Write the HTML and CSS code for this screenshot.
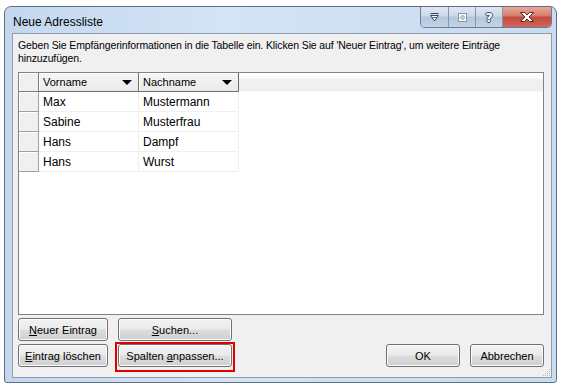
FILE: index.html
```html
<!DOCTYPE html>
<html lang="de">
<head>
<meta charset="utf-8">
<title>Neue Adressliste</title>
<link rel="stylesheet" href="styles.css">
</head>
<body>
<div class="window">
  <div class="titlebar">
    <div class="title">Neue Adressliste</div>
    <div class="caption-buttons">
      <div class="cbtn cbtn-min">
        <svg width="11" height="11" viewBox="0 0 11 11"><path d="M1.5 1.5h8" stroke="#3c4a5c" stroke-width="1.2" fill="none"/><path d="M1.5 3.5h8l-4 5.5z" fill="#fff" stroke="#3c4a5c" stroke-width="1"/><path d="M3 5.5h5" stroke="#3c4a5c" stroke-width="0.8"/></svg>
      </div>
      <div class="cbtn cbtn-res">
        <svg width="11" height="11" viewBox="0 0 11 11"><rect x="1.5" y="1.5" width="8" height="8" fill="#fff" stroke="#8a95a3"/><path d="M3 5.5l2.5-2.5 2.5 2.5-2.5 2.5z" fill="#c8ced6" stroke="#8a95a3" stroke-width="0.8"/></svg>
      </div>
      <div class="cbtn cbtn-help"><span class="help-glyph">?</span></div>
      <div class="cbtn cbtn-close">
        <svg width="16" height="12" viewBox="0 0 16 12"><path d="M1.5 1.5h4l2.5 2.5 2.5-2.5h4l-4.5 4.5 4.5 4.5h-4l-2.5-2.5-2.5 2.5h-4l4.5-4.5z" fill="#fff" stroke="#5a2a26" stroke-width="1" stroke-linejoin="round"/></svg>
      </div>
    </div>
  </div>
  <div class="client">
    <p class="intro">Geben Sie Empfängerinformationen in die Tabelle ein. Klicken Sie auf 'Neuer Eintrag', um weitere Einträge hinzuzufügen.</p>
    <div class="grid">
      <div class="grow ghead">
        <div class="rowhead corner"></div>
        <div class="colhead"><span>Vorname</span><span class="tri"></span></div>
        <div class="colhead"><span>Nachname</span><span class="tri"></span></div>
        <div class="headfill"></div>
      </div>
      <div class="grow">
        <div class="rowhead"></div>
        <div class="cell">Max</div>
        <div class="cell">Mustermann</div>
      </div>
      <div class="grow">
        <div class="rowhead"></div>
        <div class="cell">Sabine</div>
        <div class="cell">Musterfrau</div>
      </div>
      <div class="grow">
        <div class="rowhead"></div>
        <div class="cell">Hans</div>
        <div class="cell">Dampf</div>
      </div>
      <div class="grow">
        <div class="rowhead"></div>
        <div class="cell">Hans</div>
        <div class="cell">Wurst</div>
      </div>
    </div>
    <div class="btnrow">
      <button class="btn btn-left"><u>N</u>euer Eintrag</button>
      <button class="btn btn-mid"><u>S</u>uchen...</button>
    </div>
    <div class="btnrow btnrow2">
      <button class="btn btn-left"><u>E</u>intrag löschen</button>
      <button class="btn btn-mid highlighted">Spalten <u>a</u>npassen...</button>
      <div class="spacer"></div>
      <button class="btn btn-dlg">OK</button>
      <button class="btn btn-dlg">Abbrechen</button>
    </div>
    <svg class="grip" width="10" height="10" viewBox="0 0 10 10"><g fill="#b8b8b8"><rect x="8" y="2" width="1" height="1"/><rect x="6" y="4" width="1" height="1"/><rect x="8" y="4" width="1" height="1"/><rect x="4" y="6" width="1" height="1"/><rect x="6" y="6" width="1" height="1"/><rect x="8" y="6" width="1" height="1"/><rect x="2" y="8" width="1" height="1"/><rect x="4" y="8" width="1" height="1"/><rect x="6" y="8" width="1" height="1"/><rect x="8" y="8" width="1" height="1"/></g></svg>
  </div>
</div>
</body>
</html>
```
FILE: styles.css
```css
html, body {
  margin: 0;
  padding: 0;
  background: #ffffff;
  width: 563px;
  height: 385px;
  overflow: hidden;
}

body {
  font-family: "Liberation Sans", Arial, sans-serif;
  font-size: 11px;
  color: #000;
}

.window {
  box-sizing: border-box;
  margin: 6px 0 0 4px;
  width: 553px;
  height: 377px;
  border: 1px solid #5f6f84;
  border-radius: 7px 7px 3px 3px;
  background: linear-gradient(90deg, #c3d8ef 0%, #d4e3f5 40%, #c9dbf0 100%);
  padding: 0 4px 4px 7px;
  display: flex;
  flex-direction: column;
}

.titlebar {
  height: 26px;
  display: flex;
  justify-content: space-between;
  align-items: flex-start;
}

.title {
  font-size: 12px;
  padding-top: 8px;
  padding-left: 1px;
  color: #000;
}

.caption-buttons {
  display: flex;
  height: 20px;
  margin-right: 0;
  border: 1px solid #6b7d95;
  border-top: none;
  border-radius: 0 0 5px 5px;
  overflow: hidden;
}

.cbtn {
  box-sizing: border-box;
  height: 20px;
  width: 27px;
  display: flex;
  align-items: center;
  justify-content: center;
  background: linear-gradient(#dfe8f3 0%, #cbd8e8 45%, #b6c7dc 50%, #c3d3e7 100%);
  border-right: 1px solid #8597ae;
}

.cbtn-min { width: 28px; }

.cbtn-close {
  width: 48px;
  border-right: none;
  background: linear-gradient(#e8a99d 0%, #d87a6c 45%, #c44a3c 50%, #d0665a 100%);
}

.help-glyph {
  font-family: "DejaVu Sans", sans-serif;
  font-weight: bold;
  font-size: 13px;
  color: #fff;
  text-shadow: 1px 0 0 #3c4a5c, -1px 0 0 #3c4a5c, 0 1px 0 #3c4a5c, 0 -1px 0 #3c4a5c;
  line-height: 1;
}

.client {
  position: relative;
  flex: 1;
  box-sizing: border-box;
  border: 1px solid #8e9cae;
  background: #f0f0f0;
  padding: 5px 7px 0 5px;
}

.intro {
  margin: 0 0 7px 0;
  padding-left: 0;
  font-size: 10.5px;
  letter-spacing: -0.12px;
  line-height: 13px;
  height: 26px;
}

.grid {
  box-sizing: border-box;
  height: 243px;
  border: 1px solid #828282;
  background: #fff;
}

.grow {
  display: flex;
  height: 20px;
}

.ghead {
  height: 19px;
}

.rowhead {
  box-sizing: border-box;
  width: 20px;
  height: 100%;
  background: #f0f0f0;
  border-right: 1px solid #a0a0a0;
  border-bottom: 1px solid #a0a0a0;
  box-shadow: inset 1px 1px 0 #fff;
}

.corner {
  border-right: 1px solid #7a7a7a;
  border-bottom: 1px solid #7a7a7a;
}

.colhead {
  box-sizing: border-box;
  width: 100px;
  height: 100%;
  background: linear-gradient(#f6f6f6, #e9e9e9);
  border-right: 1px solid #6e6e6e;
  border-bottom: 1px solid #6e6e6e;
  box-shadow: inset 1px 1px 0 #fff;
  display: flex;
  align-items: center;
  justify-content: space-between;
  padding: 0 6px 0 4px;
}

.tri {
  width: 0;
  height: 0;
  border-left: 5px solid transparent;
  border-right: 5px solid transparent;
  border-top: 5px solid #000;
  margin-top: 1px;
}

.headfill {
  flex: 1;
  height: 100%;
  background: linear-gradient(#ffffff 0%, #ffffff 28%, #f1f1f1 30%, #eeeeee 90%, #ffffff 100%);
}

.cell {
  box-sizing: border-box;
  width: 100px;
  height: 100%;
  border-right: 1px solid #f0f0f0;
  border-bottom: 1px solid #f0f0f0;
  padding: 0 4px;
  display: flex;
  align-items: center;
  font-size: 12px;
  color: #000;
}

.btnrow {
  display: flex;
  gap: 10px;
  margin-top: 3px;
  height: 23px;
}

.btnrow2 {
  margin-top: 3px;
}

.spacer {
  flex: 1;
}

.btn {
  box-sizing: border-box;
  height: 23px;
  font-family: "Liberation Sans", Arial, sans-serif;
  font-size: 11px;
  color: #000;
  border: 1px solid #707070;
  border-radius: 3px;
  background: linear-gradient(#f2f2f2 0%, #ebebeb 48%, #dddddd 52%, #cfcfcf 100%);
  box-shadow: inset 0 0 0 1px #fcfcfc;
  padding: 0;
  margin: 0;
  text-align: center;
}

.btn u {
  text-decoration: underline;
  text-underline-offset: 1px;
}

.btn-left { width: 90px; margin-left: 0; }
.btn-mid { width: 114px; }
.btn-dlg { width: 74px; }

.highlighted {
  position: relative;
}

.highlighted::after {
  content: "";
  position: absolute;
  left: -4px;
  right: -4px;
  top: -3px;
  bottom: -6px;
  border: 2px solid #e00000;
}

.grip {
  position: absolute;
  right: 0;
  bottom: 0;
}
```
